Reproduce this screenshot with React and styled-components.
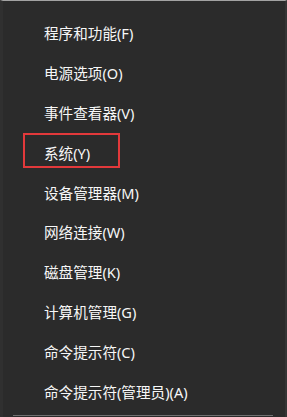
import React from 'react';
import styled, { createGlobalStyle } from 'styled-components';

const GlobalStyle = createGlobalStyle`
	html, body {
		margin: 0;
		padding: 0;
		background: #2b2b2b;
	}
	body {
		font-family: 'Noto Sans', 'Noto Sans CJK SC', sans-serif;
	}
`;

const items = [
	{ label: '程序和功能(F)' },
	{ label: '电源选项(O)' },
	{ label: '事件查看器(V)' },
	{ label: '系统(Y)', marked: true },
	{ label: '设备管理器(M)' },
	{ label: '网络连接(W)' },
	{ label: '磁盘管理(K)' },
	{ label: '计算机管理(G)' },
	{ label: '命令提示符(C)' },
	{ label: '命令提示符(管理员)(A)' },
];

const App = () => {
	return (
		<>
			<GlobalStyle />
			<Menu>
				<List>
					{items.map((item) => (
						<Item key={item.label} $marked={item.marked}>
							{item.label}
						</Item>
					))}
				</List>
				<Divider />
			</Menu>
		</>
	);
};

const Menu = styled.div`
	width: 287px;
	height: 417px;
	box-sizing: border-box;
	background: #2b2b2b;
	border-top: 1px solid #a3a3a3;
	border-left: 3px solid #303030;
	border-right: 2px solid #353535;
	display: flex;
	flex-direction: column;
	overflow: hidden;
`;

const List = styled.ul`
	list-style: none;
	margin: 0;
	padding: 12px 0 0 0;
	display: flex;
	flex-direction: column;
	flex: 1;
`;

const Item = styled.li`
	position: relative;
	height: 39.8px;
	display: flex;
	align-items: center;
	padding-left: 41px;
	color: #f7f7f7;
	font-size: 14.6px;

	&::before {
		content: '';
		display: ${(p) => (p.$marked ? 'block' : 'none')};
		position: absolute;
		left: 20px;
		top: 1px;
		width: 97px;
		height: 35px;
		box-sizing: border-box;
		border: 2px solid #e2393b;
	}
`;

const Divider = styled.div`
	height: 1px;
	margin: 0 12px 1px 10px;
	background: #707070;
`;

export default App;
